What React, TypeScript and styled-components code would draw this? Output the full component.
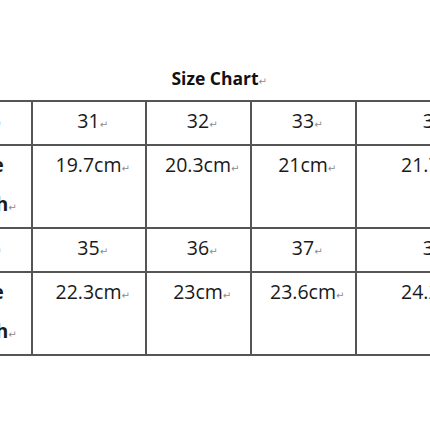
import React from 'react'
import styled, { createGlobalStyle } from 'styled-components'

const GlobalStyle = createGlobalStyle`
  html, body {
    margin: 0;
    padding: 0;
    background: #ffffff;
  }
`

type Cell = string | string[]

const rows: Cell[][] = [
  ['Size', '31', '32', '33', '34'],
  [['Insole', 'Length'], '19.7cm', '20.3cm', '21cm', '21.7cm'],
  ['Size', '35', '36', '37', '38'],
  [['Insole', 'Length'], '22.3cm', '23cm', '23.6cm', '24.2cm'],
]

const colWidths = [114, 114, 105, 105, 157]

const App = () => {
  return (
    <Page>
      <GlobalStyle />
      <Title>
        Size Chart<Mark>↵</Mark>
      </Title>
      <Table>
        <colgroup>
          {colWidths.map((w, i) => (
            <col key={i} style={{ width: w }} />
          ))}
        </colgroup>
        <tbody>
          {rows.map((row, r) => (
            <tr key={r}>
              {row.map((cell, c) =>
                Array.isArray(cell) ? (
                  <Td key={c} $label={c === 0} $multi>
                    {cell[0]}
                    <NextLine>
                      {cell[1]}
                      <Mark>↵</Mark>
                    </NextLine>
                  </Td>
                ) : (
                  <Td key={c} $label={c === 0}>
                    {cell}
                    <Mark>↵</Mark>
                  </Td>
                )
              )}
            </tr>
          ))}
        </tbody>
      </Table>
    </Page>
  )
}

export default App

const Page = styled.div`
  width: 430px;
  height: 430px;
  overflow: hidden;
  display: flex;
  flex-direction: column;
  align-items: center;
  font-family: "Open Sans", "Liberation Sans", sans-serif;
  color: #1a1a1a;
`

const Title = styled.div`
  margin-top: 66px;
  height: 34px;
  line-height: 24px;
  font-size: 17.5px;
  font-weight: 700;
  color: #111;
  text-align: center;
`

const Mark = styled.span`
  display: inline-block;
  width: 0;
  line-height: 1;
  white-space: nowrap;
  font-family: "DejaVu Sans", sans-serif;
  font-size: 10px;
  font-weight: 400;
  color: #8c8c8c;
`

const NextLine = styled.span`
  display: block;
  margin-top: 1px;
`

const Table = styled.table`
  flex-shrink: 0;
  border-collapse: collapse;
  table-layout: fixed;
  width: 595px;
`

const Td = styled.td<{ $label?: boolean; $multi?: boolean }>`
  border: 2px solid #555;
  padding: 0 0 4px;
  vertical-align: top;
  text-align: center;
  font-size: 19.5px;
  line-height: 38px;
  font-weight: ${p => (p.$label ? 700 : 400)};
  white-space: nowrap;
`
